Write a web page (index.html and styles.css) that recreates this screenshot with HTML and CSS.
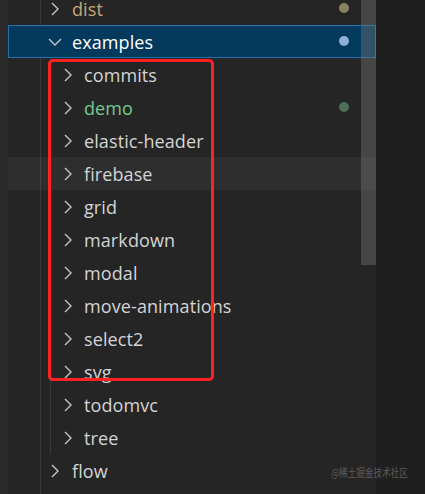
FILE: index.html
```html
<!DOCTYPE html>
<html>
<head>
<meta charset="utf-8">
<link rel="stylesheet" href="styles.css">
</head>
<body>
<div class="screen">
  <div class="strip"></div>
  <div class="panel">
    <div class="tree">
      <div class="group g1">
        <div class="row top"><svg class="chev" viewBox="0 0 10 16"><path d="M2 2 L8 8 L2 14"/></svg><span class="name dist">dist</span><span class="dot dot-dist"></span></div>
        <div class="row top selected"><svg class="chev down" viewBox="0 0 16 10"><path d="M2 2 L8 8 L14 2"/></svg><span class="name">examples</span><span class="dot dot-ex"></span></div>
        <div class="group g2">
          <div class="row child"><svg class="chev" viewBox="0 0 10 16"><path d="M2 2 L8 8 L2 14"/></svg><span class="name">commits</span></div>
          <div class="row child"><svg class="chev" viewBox="0 0 10 16"><path d="M2 2 L8 8 L2 14"/></svg><span class="name demo">demo</span><span class="dot dot-demo"></span></div>
          <div class="row child"><svg class="chev" viewBox="0 0 10 16"><path d="M2 2 L8 8 L2 14"/></svg><span class="name">elastic-header</span></div>
          <div class="row child hover"><svg class="chev" viewBox="0 0 10 16"><path d="M2 2 L8 8 L2 14"/></svg><span class="name">firebase</span></div>
          <div class="row child"><svg class="chev" viewBox="0 0 10 16"><path d="M2 2 L8 8 L2 14"/></svg><span class="name">grid</span></div>
          <div class="row child"><svg class="chev" viewBox="0 0 10 16"><path d="M2 2 L8 8 L2 14"/></svg><span class="name">markdown</span></div>
          <div class="row child"><svg class="chev" viewBox="0 0 10 16"><path d="M2 2 L8 8 L2 14"/></svg><span class="name">modal</span></div>
          <div class="row child"><svg class="chev" viewBox="0 0 10 16"><path d="M2 2 L8 8 L2 14"/></svg><span class="name">move-animations</span></div>
          <div class="row child"><svg class="chev" viewBox="0 0 10 16"><path d="M2 2 L8 8 L2 14"/></svg><span class="name">select2</span></div>
          <div class="row child"><svg class="chev" viewBox="0 0 10 16"><path d="M2 2 L8 8 L2 14"/></svg><span class="name">svg</span></div>
          <div class="row child"><svg class="chev" viewBox="0 0 10 16"><path d="M2 2 L8 8 L2 14"/></svg><span class="name">todomvc</span></div>
          <div class="row child"><svg class="chev" viewBox="0 0 10 16"><path d="M2 2 L8 8 L2 14"/></svg><span class="name">tree</span></div>
        </div>
        <div class="row top"><svg class="chev" viewBox="0 0 10 16"><path d="M2 2 L8 8 L2 14"/></svg><span class="name">flow</span></div>
      </div>
    </div>
    <div class="scrollbar"></div>
    <div class="highlight-box"></div>
  </div>
  <div class="watermark">@稀土掘金技术社区</div>
</div>
</body>
</html>
```
FILE: styles.css
```css
html, body {
  margin: 0;
  padding: 0;
  background: #1f1f1f;
}
.screen {
  position: relative;
  width: 425px;
  height: 494px;
  overflow: hidden;
  display: flex;
  background: #1f1f1f;
  font-family: "Open Sans", "Noto Sans", sans-serif;
}
.strip {
  width: 8px;
  background: #2a2a2a;
  flex: none;
}
.panel {
  position: relative;
  width: 368px;
  flex: none;
  background: #252526;
}
.tree {
  margin-top: -8px;
}
.group {
  position: relative;
}
.group::before {
  content: "";
  position: absolute;
  top: 0;
  bottom: 0;
  width: 1px;
  background: #3a3a3a;
}
.g1::before {
  left: 32px;
  top: -20px;
  bottom: -100px;
}
.g2::before {
  left: 42px;
}
.row {
  position: relative;
  height: 33px;
  display: flex;
  align-items: center;
  color: #d4d4d4;
  font-size: 18px;
  box-sizing: border-box;
}
.row.top {
  padding-left: 42px;
}
.row.child {
  padding-left: 55px;
}
.chev {
  width: 10px;
  height: 16px;
  fill: none;
  stroke: #c5c5c5;
  stroke-width: 1.4;
  flex: none;
  margin-right: 12px;
}
.row.child .chev {
  margin-right: 11px;
}
.chev.down {
  width: 16px;
  height: 10px;
  margin-left: -3px;
  margin-right: 9px;
}
.name {
  white-space: nowrap;
  line-height: 1;
  margin-top: 0;
  letter-spacing: 0.1px;
}
.name.dist {
  color: #c8a577;
}
.name.demo {
  color: #73c991;
}
.selected {
  background: #04395e;
  box-shadow: inset 0 0 0 1px #2272ad;
  color: #ffffff;
}
.hover {
  background: rgba(255, 255, 255, 0.045);
}
.dot {
  position: absolute;
  left: 331px;
  top: 11px;
  width: 10px;
  height: 10px;
  border-radius: 50%;
}
.dot-dist { background: #858360; }
.dot-ex { background: #8fb1d4; }
.dot-demo { background: #4d6e56; }
.scrollbar {
  position: absolute;
  right: 0;
  top: 0;
  width: 15px;
  height: 265px;
  background: rgba(121, 121, 121, 0.4);
}
.highlight-box {
  position: absolute;
  left: 40px;
  top: 59px;
  width: 166px;
  height: 322px;
  box-sizing: border-box;
  border: 3px solid #ff2222;
  border-radius: 5px;
}
.watermark {
  position: absolute;
  left: 331px;
  top: 464px;
  font-family: "Noto Sans CJK SC", sans-serif;
  font-size: 11px;
  color: #5c5c5c;
  white-space: nowrap;
  transform: scaleX(0.78);
  transform-origin: left center;
}
```
